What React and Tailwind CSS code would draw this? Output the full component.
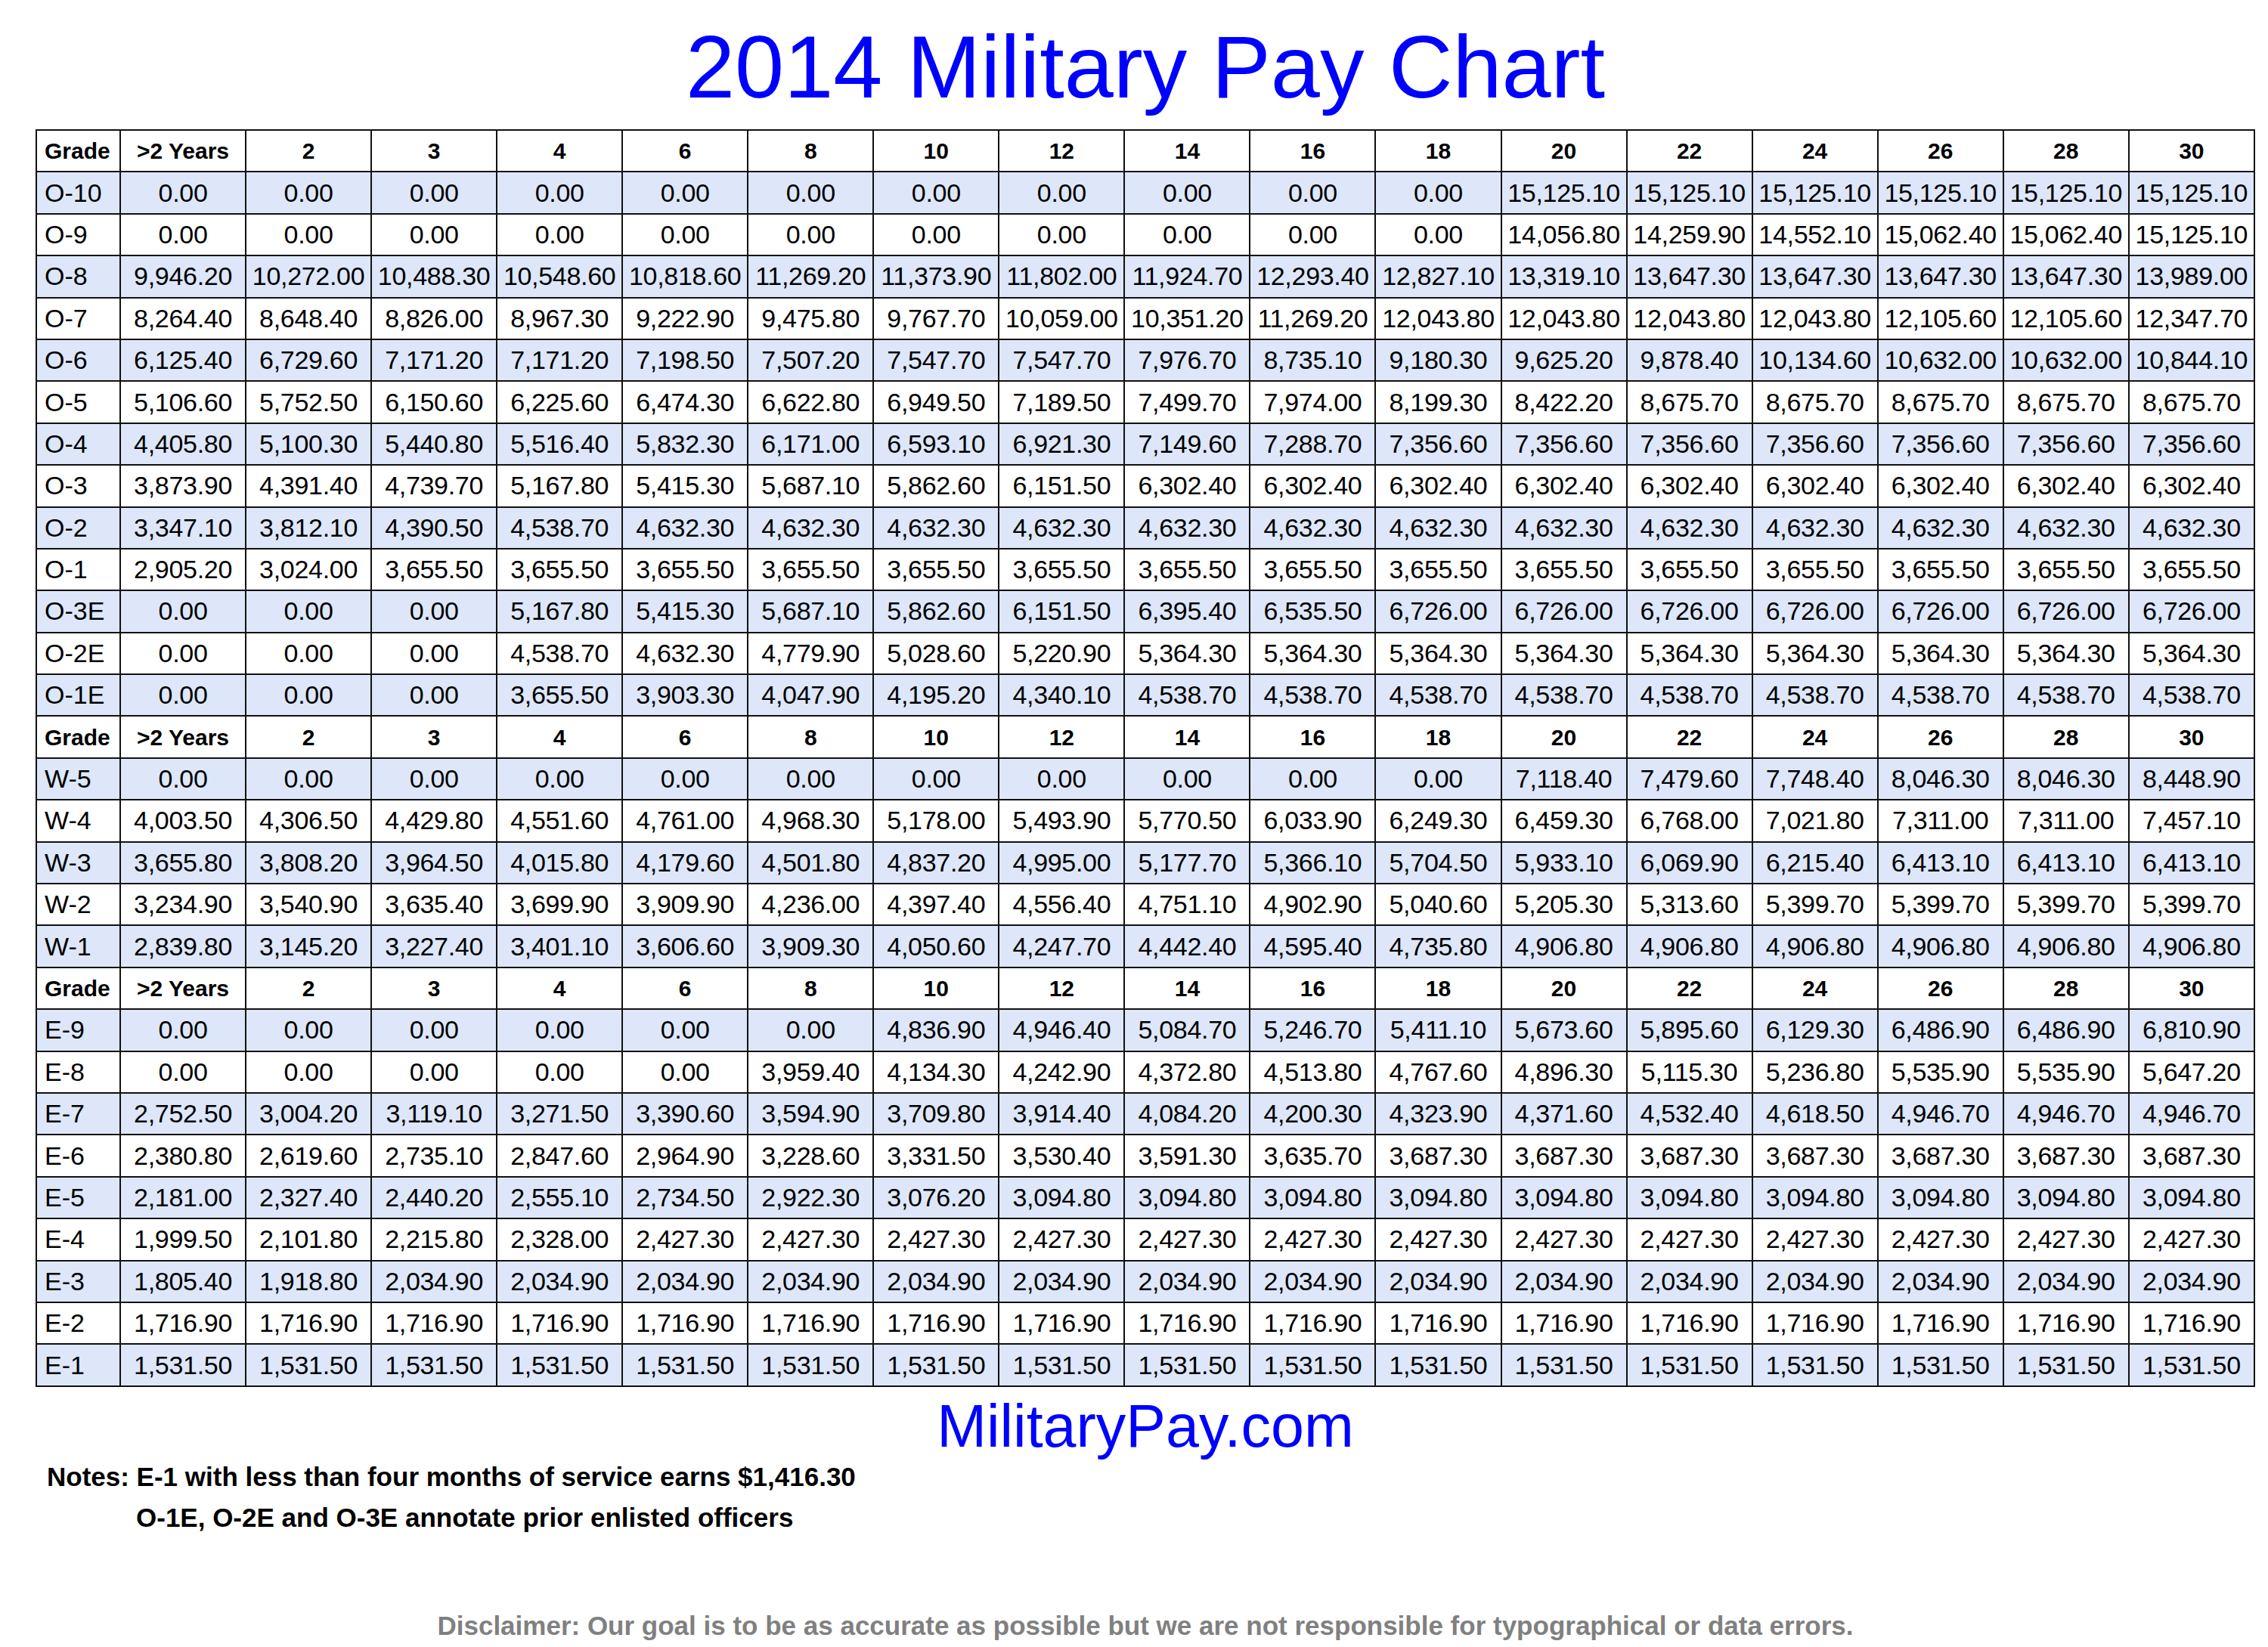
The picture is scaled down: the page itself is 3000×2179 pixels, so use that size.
import React from 'react';

const rep = (v, n) => Array(n).fill(v);
const Z = '0.00';

const YEARS = ['>2 Years', '2', '3', '4', '6', '8', '10', '12', '14', '16', '18', '20', '22', '24', '26', '28', '30'];

const officers = [
  ['O-10', [...rep(Z, 11), ...rep('15,125.10', 6)]],
  ['O-9', [...rep(Z, 11), '14,056.80', '14,259.90', '14,552.10', '15,062.40', '15,062.40', '15,125.10']],
  ['O-8', ['9,946.20', '10,272.00', '10,488.30', '10,548.60', '10,818.60', '11,269.20', '11,373.90', '11,802.00', '11,924.70', '12,293.40', '12,827.10', '13,319.10', '13,647.30', '13,647.30', '13,647.30', '13,647.30', '13,989.00']],
  ['O-7', ['8,264.40', '8,648.40', '8,826.00', '8,967.30', '9,222.90', '9,475.80', '9,767.70', '10,059.00', '10,351.20', '11,269.20', '12,043.80', '12,043.80', '12,043.80', '12,043.80', '12,105.60', '12,105.60', '12,347.70']],
  ['O-6', ['6,125.40', '6,729.60', '7,171.20', '7,171.20', '7,198.50', '7,507.20', '7,547.70', '7,547.70', '7,976.70', '8,735.10', '9,180.30', '9,625.20', '9,878.40', '10,134.60', '10,632.00', '10,632.00', '10,844.10']],
  ['O-5', ['5,106.60', '5,752.50', '6,150.60', '6,225.60', '6,474.30', '6,622.80', '6,949.50', '7,189.50', '7,499.70', '7,974.00', '8,199.30', '8,422.20', ...rep('8,675.70', 5)]],
  ['O-4', ['4,405.80', '5,100.30', '5,440.80', '5,516.40', '5,832.30', '6,171.00', '6,593.10', '6,921.30', '7,149.60', '7,288.70', ...rep('7,356.60', 7)]],
  ['O-3', ['3,873.90', '4,391.40', '4,739.70', '5,167.80', '5,415.30', '5,687.10', '5,862.60', '6,151.50', ...rep('6,302.40', 9)]],
  ['O-2', ['3,347.10', '3,812.10', '4,390.50', '4,538.70', ...rep('4,632.30', 13)]],
  ['O-1', ['2,905.20', '3,024.00', ...rep('3,655.50', 15)]],
  ['O-3E', [...rep(Z, 3), '5,167.80', '5,415.30', '5,687.10', '5,862.60', '6,151.50', '6,395.40', '6,535.50', ...rep('6,726.00', 7)]],
  ['O-2E', [...rep(Z, 3), '4,538.70', '4,632.30', '4,779.90', '5,028.60', '5,220.90', ...rep('5,364.30', 9)]],
  ['O-1E', [...rep(Z, 3), '3,655.50', '3,903.30', '4,047.90', '4,195.20', '4,340.10', ...rep('4,538.70', 9)]],
];

const warrant = [
  ['W-5', [...rep(Z, 11), '7,118.40', '7,479.60', '7,748.40', '8,046.30', '8,046.30', '8,448.90']],
  ['W-4', ['4,003.50', '4,306.50', '4,429.80', '4,551.60', '4,761.00', '4,968.30', '5,178.00', '5,493.90', '5,770.50', '6,033.90', '6,249.30', '6,459.30', '6,768.00', '7,021.80', '7,311.00', '7,311.00', '7,457.10']],
  ['W-3', ['3,655.80', '3,808.20', '3,964.50', '4,015.80', '4,179.60', '4,501.80', '4,837.20', '4,995.00', '5,177.70', '5,366.10', '5,704.50', '5,933.10', '6,069.90', '6,215.40', '6,413.10', '6,413.10', '6,413.10']],
  ['W-2', ['3,234.90', '3,540.90', '3,635.40', '3,699.90', '3,909.90', '4,236.00', '4,397.40', '4,556.40', '4,751.10', '4,902.90', '5,040.60', '5,205.30', '5,313.60', ...rep('5,399.70', 4)]],
  ['W-1', ['2,839.80', '3,145.20', '3,227.40', '3,401.10', '3,606.60', '3,909.30', '4,050.60', '4,247.70', '4,442.40', '4,595.40', '4,735.80', ...rep('4,906.80', 6)]],
];

const enlisted = [
  ['E-9', [...rep(Z, 6), '4,836.90', '4,946.40', '5,084.70', '5,246.70', '5,411.10', '5,673.60', '5,895.60', '6,129.30', '6,486.90', '6,486.90', '6,810.90']],
  ['E-8', [...rep(Z, 5), '3,959.40', '4,134.30', '4,242.90', '4,372.80', '4,513.80', '4,767.60', '4,896.30', '5,115.30', '5,236.80', '5,535.90', '5,535.90', '5,647.20']],
  ['E-7', ['2,752.50', '3,004.20', '3,119.10', '3,271.50', '3,390.60', '3,594.90', '3,709.80', '3,914.40', '4,084.20', '4,200.30', '4,323.90', '4,371.60', '4,532.40', '4,618.50', '4,946.70', '4,946.70', '4,946.70']],
  ['E-6', ['2,380.80', '2,619.60', '2,735.10', '2,847.60', '2,964.90', '3,228.60', '3,331.50', '3,530.40', '3,591.30', '3,635.70', ...rep('3,687.30', 7)]],
  ['E-5', ['2,181.00', '2,327.40', '2,440.20', '2,555.10', '2,734.50', '2,922.30', '3,076.20', ...rep('3,094.80', 10)]],
  ['E-4', ['1,999.50', '2,101.80', '2,215.80', '2,328.00', ...rep('2,427.30', 13)]],
  ['E-3', ['1,805.40', '1,918.80', ...rep('2,034.90', 15)]],
  ['E-2', rep('1,716.90', 17)],
  ['E-1', rep('1,531.50', 17)],
];

const cell = 'border-2 border-[#111] h-[55.4px] p-0 align-middle whitespace-nowrap';

const HeaderRow = () => (
  <tr className="bg-white">
    <td className={`${cell} text-left pl-[10px] font-bold text-[30px]`}>Grade</td>
    {YEARS.map((y) => (
      <td key={y} className={`${cell} text-center font-bold text-[30px]`}>{y}</td>
    ))}
  </tr>
);

const Group = ({ rows }) =>
  rows.map(([grade, vals], i) => (
    <tr key={grade} className={i % 2 === 0 ? 'bg-[#dde7f9]' : 'bg-white'}>
      <td className={`${cell} text-left pl-[10px] text-[34px]`}>{grade}</td>
      {vals.map((v, j) => (
        <td key={j} className={`${cell} text-center text-[34px] tracking-[-0.3px]`}>{v}</td>
      ))}
    </tr>
  ));

export default function App() {
  return (
    <div className="w-[3000px] h-[2179px] bg-white text-black font-['Liberation_Sans',Arial,sans-serif]">
      <div className="ml-[47px] w-[2936px] flex flex-col">
        <h1 className="pt-[31px] h-[171px] text-center text-[117px] leading-[116px] text-[#0000ff] font-normal">
          2014 Military Pay Chart
        </h1>

        <table className="w-[2936px] table-fixed border-collapse border-2 border-[#111]">
          <colgroup>
            <col className="w-[111px]" />
            {YEARS.map((y) => (
              <col key={y} />
            ))}
          </colgroup>
          <tbody>
            <HeaderRow />
            <Group rows={officers} />
            <HeaderRow />
            <Group rows={warrant} />
            <HeaderRow />
            <Group rows={enlisted} />
          </tbody>
        </table>

        <div className="mt-[13px] text-center text-[79px] leading-[78px] text-[#0000ff]">MilitaryPay.com</div>

        <div className="mt-[1px] ml-[15px] font-bold text-[35px] leading-[54px]">
          <div>Notes: E-1 with less than four months of service earns $1,416.30</div>
          <div className="pl-[118px]">O-1E, O-2E and O-3E annotate prior enlisted officers</div>
        </div>

        <div className="mt-[100px] text-center font-bold text-[35px] leading-[32px] text-[#808080]">
          Disclaimer: Our goal is to be as accurate as possible but we are not responsible for typographical or data errors.
        </div>
      </div>
    </div>
  );
}
